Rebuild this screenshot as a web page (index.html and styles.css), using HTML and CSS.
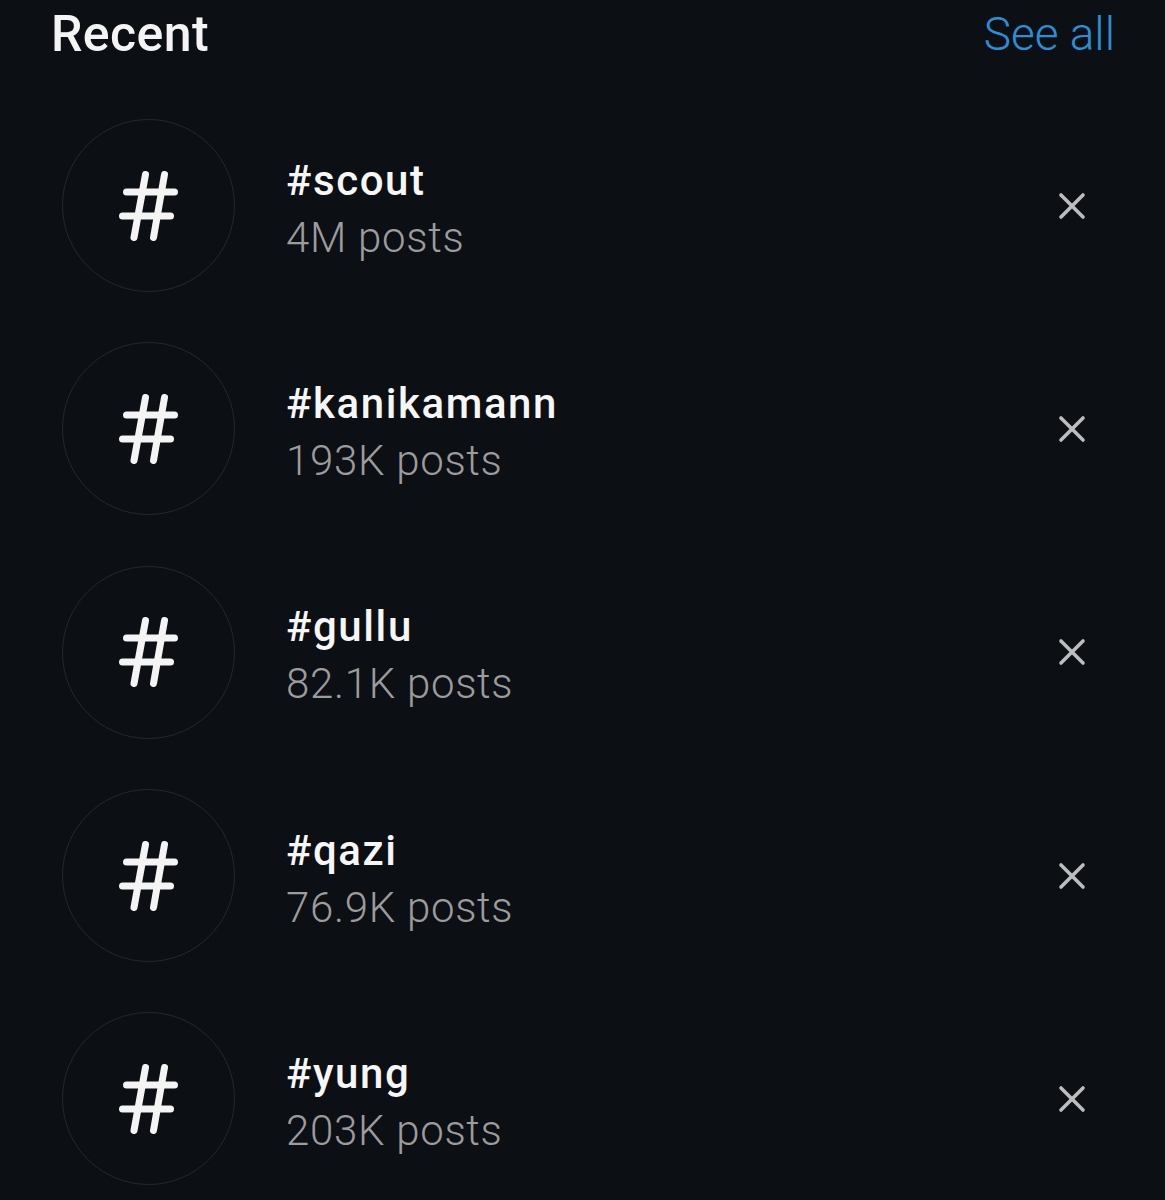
FILE: index.html
```html
<!DOCTYPE html>
<html lang="en">
<head>
<meta charset="UTF-8">
<title>Recent</title>
<link rel="stylesheet" href="styles.css">
</head>
<body>

<div class="recent-container">
    <div class="recent-header">
        <h2 class="recent-title">Recent</h2>
        <a class="see-all" href="#">See all</a>
    </div>

    <div class="tag-list" id="tagList"></div>
</div>

<script>
    // 最近搜索的话题
    const tags = [
        { name: '#scout', posts: '4M posts' },
        { name: '#kanikamann', posts: '193K posts' },
        { name: '#gullu', posts: '82.1K posts' },
        { name: '#qazi', posts: '76.9K posts' },
        { name: '#yung', posts: '203K posts' }
    ];

    const hashIcon = `
        <svg class="hash-icon" viewBox="0 0 60 70" width="60" height="70">
            <g stroke="#f4f4f4" stroke-width="7" stroke-linecap="round" fill="none">
                <line x1="7.5" y1="21" x2="55.5" y2="21"/>
                <line x1="3.5" y1="45" x2="51.5" y2="45"/>
                <line x1="26.5" y1="3.5" x2="15" y2="66.5"/>
                <line x1="45.5" y1="3.5" x2="34.5" y2="66.5"/>
            </g>
        </svg>`;

    const closeIcon = `
        <svg viewBox="0 0 28 28" width="28" height="28">
            <g stroke="#bdbdbd" stroke-width="3.6" stroke-linecap="round">
                <line x1="3" y1="3" x2="25" y2="25"/>
                <line x1="25" y1="3" x2="3" y2="25"/>
            </g>
        </svg>`;

    let html = '';
    tags.forEach(function(tag) {
        html += `
            <div class="tag-row">
                <div class="tag-circle">${hashIcon}</div>
                <div class="tag-text">
                    <div class="tag-name">${tag.name}</div>
                    <div class="tag-posts">${tag.posts}</div>
                </div>
                <button class="remove-btn" aria-label="Remove">${closeIcon}</button>
            </div>`;
    });
    document.getElementById('tagList').innerHTML = html;
</script>

</body>
</html>
```

FILE: styles.css
```css
body {
    margin: 0;
    background-color: #0c0f14;
    font-family: Roboto, "Noto Sans", sans-serif;
    color: #f4f4f4;
}
.recent-container {
    width: 1165px;
    height: 1200px;
    overflow: hidden;
}
.recent-header {
    display: flex;
    justify-content: space-between;
    align-items: flex-start;
    height: 94px;
    padding: 0 50px 0 51px;
}
.recent-title {
    margin: 0;
    margin-top: 2px;
    font-size: 50px;
    font-weight: 500;
    line-height: 64px;
    letter-spacing: 0.4px;
}
.see-all {
    margin-top: 2px;
    font-size: 46px;
    font-weight: 300;
    line-height: 64px;
    color: #2b8fd8;
    text-decoration: none;
}
.tag-row {
    display: flex;
    align-items: center;
    height: 223.3px;
    padding: 0 79px 0 62px;
}
.tag-circle {
    width: 171px;
    height: 171px;
    flex-shrink: 0;
    border: 1px solid #24272c;
    border-radius: 50%;
    display: flex;
    align-items: center;
    justify-content: center;
}
.tag-text {
    flex: 1;
    padding-left: 51px;
    padding-top: 6px;
}
.tag-name {
    font-size: 42px;
    font-weight: 500;
    line-height: 57px;
    letter-spacing: 1.6px;
    color: #f6f6f6;
}
.tag-posts {
    font-size: 42px;
    font-weight: 300;
    line-height: 57px;
    letter-spacing: 0.7px;
    color: #9c9c9c;
}
.remove-btn {
    background: none;
    border: none;
    padding: 0;
    width: 28px;
    height: 28px;
    cursor: pointer;
}
```
